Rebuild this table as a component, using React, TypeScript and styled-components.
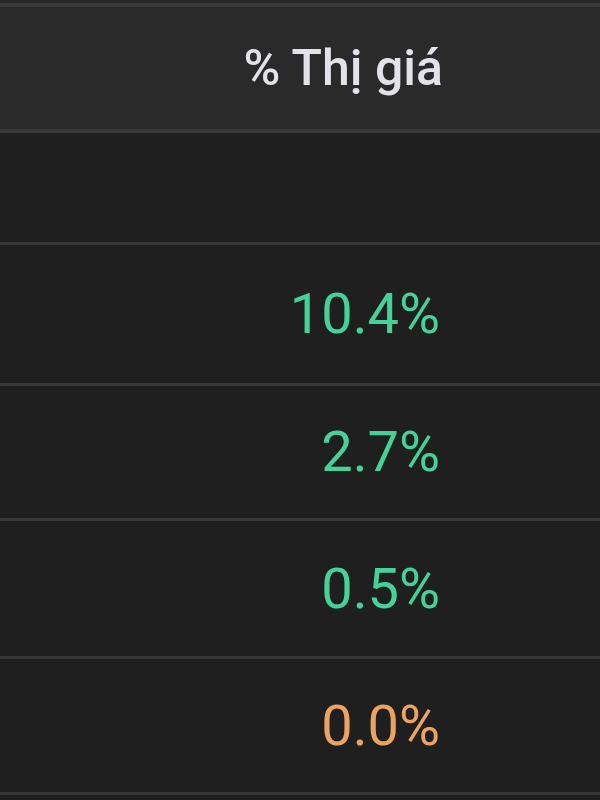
import React from "react";
import styled, { createGlobalStyle } from "styled-components";

const Global = createGlobalStyle`
  html, body { margin: 0; padding: 0; background: #1f1f1f; }
  body { font-family: Roboto, "Noto Sans", "Liberation Sans", sans-serif; }
`;

const Table = styled.div`
  width: 600px;
  height: 800px;
  display: flex;
  flex-direction: column;
  background: #1f1f1f;
  box-sizing: border-box;
  border-top: 3px solid #262626;
`;

const HeaderRow = styled.div`
  height: 122px;
  flex: none;
  display: flex;
  align-items: center;
  justify-content: flex-end;
  padding-right: 157px;
  background: #2a2a2a;
  border-top: 4px solid #393939;
  border-bottom: 4px solid #393939;
  color: #e2e2e8;
  font-size: 50px;
  font-weight: 500;
`;

const Row = styled.div<{ $h: number }>`
  height: ${(p) => p.$h}px;
  flex: none;
  display: flex;
  align-items: center;
  justify-content: flex-end;
  padding-right: 160px;
  border-bottom: 3px solid #383838;
  font-size: 56px;
  font-weight: 400;
`;

const Value = styled.span<{ $tone: "up" | "flat" }>`
  color: ${(p) => (p.$tone === "up" ? "#43d39a" : "#eba35f")};
`;

const rows: { h: number; v?: string; tone?: "up" | "flat" }[] = [
  { h: 109 },
  { h: 138, v: "10.4%", tone: "up" },
  { h: 132, v: "2.7%", tone: "up" },
  { h: 135, v: "0.5%", tone: "up" },
  { h: 133, v: "0.0%", tone: "flat" },
];

export default function App() {
  return (
    <>
      <Global />
      <Table>
        <HeaderRow>% Thị giá</HeaderRow>
        {rows.map((r, i) => (
          <Row key={i} $h={r.h}>
            {r.v && <Value $tone={r.tone!}>{r.v}</Value>}
          </Row>
        ))}
      </Table>
    </>
  );
}
